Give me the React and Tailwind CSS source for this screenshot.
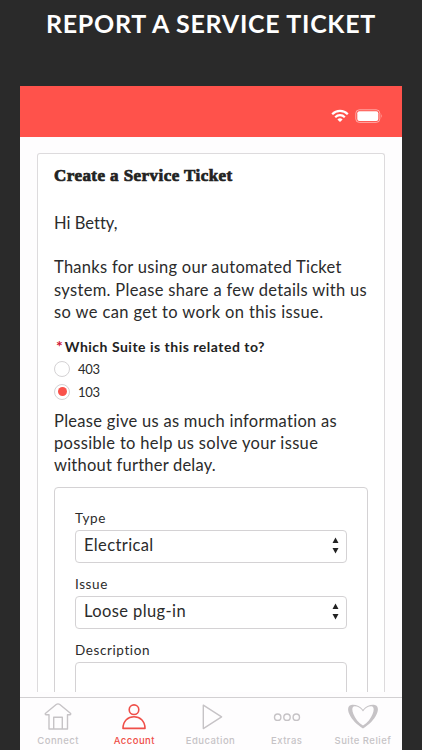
const INTRO = [
  { text: 'Thanks for using our automated Ticket', spacing: 'tracking-[0.28px]' },
  { text: 'system. Please share a few details with us', spacing: 'tracking-[0.32px]' },
  { text: 'so we can get to work on this issue.', spacing: 'tracking-[0.37px]' },
];

const HELP = [
  { text: 'Please give us as much information as', spacing: 'tracking-[0.29px]' },
  { text: 'possible to help us solve your issue', spacing: 'tracking-[0.33px]' },
  { text: 'without further delay.', spacing: 'tracking-[0.22px]' },
];

function Lines({ lines }) {
  return (
    <p className="text-[16.5px] leading-[22.3px] whitespace-nowrap">
      {lines.map((l) => (
        <span key={l.text} className={`block ${l.spacing}`}>{l.text}</span>
      ))}
    </p>
  );
}

function Radio({ label, checked }) {
  return (
    <label className="flex items-center h-[22.3px]">
      <span className="w-4 h-4 rounded-full border border-[#d4d2d4] flex items-center justify-center">
        {checked && <span className="w-[9px] h-[9px] rounded-full bg-[#f9524b]" />}
      </span>
      <span className="ml-2 text-[13px] leading-5 tracking-[-0.3px]">{label}</span>
    </label>
  );
}

function SelectField({ label, value, spacing }) {
  return (
    <div className="h-[66px]">
      <p className="text-[13.5px] leading-4 tracking-[0.6px]">{label}</p>
      <div className="mt-1 h-[33px] border border-[#d4d2d4] rounded-[4px] flex items-center justify-between pl-2 pr-[7px]">
        <span className={`text-[16.5px] leading-[22px] pb-[3px] ${spacing}`}>{value}</span>
        <svg width="7" height="17" viewBox="0 0 7 17" fill="#222" className="mb-px">
          <path d="M3.5 0.5 6.5 6H.5zM3.5 16.5 6.5 11H.5z" />
        </svg>
      </div>
    </div>
  );
}

const TABS = [
  {
    label: 'Connect',
    icon: (
      <path d="M6 11.8H2.8Q1.8 11 2.6 10.2L13.2 1.5Q15 .2 16.8 1.5L27.4 10.2Q28.2 11 27.2 11.8H24.5V26H6zM10.7 26V14.3H19.3V26" />
    ),
  },
  {
    label: 'Account',
    active: true,
    icon: (
      <>
        <circle cx="15" cy="6.7" r="4.8" />
        <path d="M4 25.4C4 18 9 13.7 15 13.7S26 18 26 25.4z" />
      </>
    ),
  },
  { label: 'Education', icon: <path d="M7.3 2.2V25.6L25.6 13.9z" /> },
  {
    label: 'Extras',
    icon: (
      <>
        <circle cx="5.7" cy="14.2" r="3.2" />
        <circle cx="15" cy="14.2" r="3.2" />
        <circle cx="24.3" cy="14.2" r="3.2" />
      </>
    ),
  },
  {
    label: 'Suite Relief',
    icon: (
      <path
        d="M15 6.8C12 2.8 7.5 1.3 3.2 1.9C-.5 2.8-.6 6.8 1.4 11.3C3.8 16.6 8.7 21.6 15 25.5C21.3 21.6 26.2 16.6 28.6 11.3C30.6 6.8 30.5 2.8 26.8 1.9C22.5 1.3 18 2.8 15 6.8zM15 8.4C17.5 4.8 20.5 3.2 23.4 3.3C26.2 3.8 26.2 7 24.6 11C22.8 15.6 19.6 19.8 15 22.6C10.4 19.8 7.2 15.6 5.4 11C3.8 7 3.8 3.8 6.6 3.3C9.5 3.2 12.5 4.8 15 8.4z"
        fill="currentColor"
        fillRule="evenodd"
        stroke="none"
      />
    ),
  },
];

function TabBar() {
  return (
    <nav className="h-[53px] shrink-0 flex border-t border-[#d2d0d2] bg-[#fefdfe] pr-px font-['Inter',sans-serif]">
      {TABS.map((tab) => (
        <div
          key={tab.label}
          className={`flex-1 flex flex-col items-center pt-[5px] ${tab.active ? 'text-[#ef4f49]' : 'text-[#c6c3c6]'}`}
        >
          <svg width="30" height="30" viewBox="0 0 30 30" fill="none" stroke="currentColor" strokeWidth={tab.active ? 1.6 : 1.4} strokeLinejoin="round">
            {tab.icon}
          </svg>
          <span className="mt-px text-[9.5px] leading-[14px] font-medium tracking-[0.47px] whitespace-nowrap">{tab.label}</span>
        </div>
      ))}
    </nav>
  );
}

export default function App() {
  return (
    <div className="w-[422px] h-[750px] overflow-hidden bg-[#2a2a2a] px-5 flex flex-col font-['Lato',sans-serif] text-[#2b2b2b]">
      <h1 className="h-[86px] shrink-0 pt-[7px] text-center text-[25px] leading-8 font-bold text-white tracking-[0.7px] whitespace-nowrap">
        REPORT A SERVICE TICKET
      </h1>

      <div className="h-[51px] shrink-0 bg-[#ff524b] flex justify-end pt-[23px] pr-[19px]">
        <svg width="18" height="14" viewBox="0 0 18 14" fill="none" stroke="#fff" strokeWidth="2.2">
          <path d="M1.2 5.2C5.5.7 12.5.7 16.8 5.2M4.2 8.2C6.9 5.5 11.1 5.5 13.8 8.2" />
          <path d="M9 13 6.4 10.4Q9 8.2 11.6 10.4z" fill="#fff" stroke="none" />
        </svg>
        <svg width="28" height="14" viewBox="0 0 28 14" className="ml-1.5">
          <rect x=".8" y=".8" width="24" height="12.6" rx="3.5" fill="none" stroke="#fff" strokeOpacity=".5" />
          <rect x="2.3" y="2.3" width="21" height="9.6" rx="2" fill="#fff" />
          <path d="M26.3 5Q27.8 7 26.3 9z" fill="#fff" fillOpacity=".5" />
        </svg>
      </div>

      <div className="h-[560px] shrink-0 bg-[#fefdfe] pt-4 px-[17px] pb-[5px]">
        <main className="h-[539px] overflow-hidden border border-b-0 border-[#dddbdd] rounded-t-[3px] bg-white px-4">
          <h2 className="mt-[11px] font-['Liberation_Serif',serif] font-bold text-[17px] leading-[22px] text-[#222] tracking-[0.44px] whitespace-nowrap [-webkit-text-stroke:0.7px_#222]">
            Create a Service Ticket
          </h2>
          <p className="mt-[25px] mb-[22px] text-[16.5px] leading-[22.3px] tracking-[0.02px] [font-variant-ligatures:none]">Hi Betty,</p>
          <Lines lines={INTRO} />

          <p className="mt-[11px] h-[23px] pl-0.5 text-[14px] leading-[23px] font-bold text-[#222] whitespace-nowrap">
            <span className="text-[#cf1535] text-[16px]">*</span>
            <span className="ml-[2px] tracking-[0.5px]">Which Suite is this related to?</span>
          </p>
          <div className="mt-px">
            <Radio label="403" />
            <Radio label="103" checked />
          </div>

          <div className="mt-[7px]">
            <Lines lines={HELP} />
          </div>

          <section className="mt-[10px] h-[260px] border border-[#d4d2d4] rounded-[4px] px-5 pt-[22px]">
            <SelectField label="Type" value="Electrical" spacing="tracking-[0.38px]" />
            <SelectField label="Issue" value="Loose plug-in" spacing="tracking-[0.4px]" />
            <p className="text-[13.5px] leading-4 tracking-[0.6px]">Description</p>
            <div className="mt-1 h-24 border border-[#d4d2d4] rounded-[4px]" />
          </section>
        </main>
      </div>

      <TabBar />
    </div>
  );
}
